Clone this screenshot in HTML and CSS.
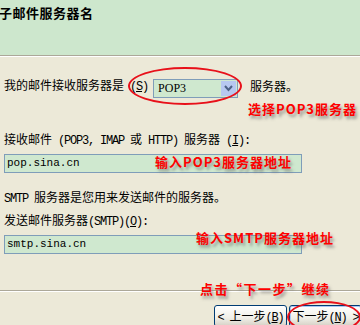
FILE: index.html
```html
<!DOCTYPE html>
<html>
<head>
<meta charset="utf-8">
<link rel="stylesheet" href="styles.css">
</head>
<body>
<div class="page">
  <div class="header">
    <div class="title">子邮件服务器名</div>
  </div>
  <div class="content">
    <div class="row1">
      <span class="label">我的邮件接收服务器是<span class="lat"> (<u>S</u>)</span></span>
      <div class="combo">
        <span class="combo-text">POP3</span>
        <span class="combo-btn">
          <svg width="9" height="9" viewBox="0 0 9 9"><path d="M1 2 L4.5 6 L8 2" fill="none" stroke="#4d6185" stroke-width="2"/></svg>
        </span>
      </div>
      <span class="label">服务器。</span>
    </div>
    <div class="label l2">接收邮件<span class="lat"> (POP3, IMAP </span>或<span class="lat"> HTTP) </span>服务器<span class="lat"> (<u>I</u>):</span></div>
    <div class="input">pop.sina.cn</div>
    <div class="label l3"><span class="lat">SMTP </span>服务器是您用来发送邮件的服务器。</div>
    <div class="label l4">发送邮件服务器<span class="lat">(SMTP)(<u>O</u>):</span></div>
    <div class="input">smtp.sina.cn</div>
  </div>
  <div class="footer">
    <div class="btn"><span class="lat">&lt; </span>上一步<span class="lat">(<u>B</u>)</span></div>
    <div class="btn next">下一步<span class="lat">(<u>N</u>) &gt;</span></div>
  </div>

  <div class="note n1">选择POP3服务器</div>
  <div class="note n2">输入POP3服务器地址</div>
  <div class="note n3">输入SMTP服务器地址</div>
  <div class="note n4">点击“下一步”继续</div>
  <div class="ring r1"></div>
  <div class="ring r2"></div>
</div>
</body>
</html>
```

FILE: styles.css
```css
html, body {
  margin: 0;
  padding: 0;
}
body {
  width: 360px;
  height: 325px;
  overflow: hidden;
  background: #ece9d8;
  font-family: "Noto Sans CJK SC", "DejaVu Sans", sans-serif;
  font-size: 12px;
  color: #000;
}
.page {
  position: relative;
  width: 360px;
  height: 325px;
  overflow: hidden;
}
.header {
  height: 55px;
  background: #cde7cd;
  border-bottom: 1px solid #aca899;
  box-shadow: 0 1px 0 #ffffff;
}
.title {
  font-size: 13px;
  font-weight: bold;
  line-height: 16px;
  padding-top: 5px;
  margin-left: -1px;
  letter-spacing: 0.5px;
}
.content {
  padding: 0 0 0 4px;
  display: flex;
  flex-direction: column;
}
.label {
  line-height: 14px;
  white-space: nowrap;
}
.lat {
  font-family: "Liberation Mono", monospace;
  letter-spacing: -1.2px;
}
u {
  text-underline-offset: 1px;
}
.row1 {
  display: flex;
  align-items: center;
  margin-top: 20px;
  height: 20px;
}
.combo {
  display: flex;
  width: 83px;
  height: 17px;
  border: 1px solid #7f9db9;
  background: #cfe8cf;
  margin-left: 5px;
  margin-right: 12px;
  margin-top: 5px;
}
.combo-text {
  flex: 1;
  padding-left: 4px;
  line-height: 17px;
  font-family: "Liberation Serif", serif;
  font-size: 12px;
}
.combo-btn {
  width: 15px;
  height: 15px;
  margin: 1px;
  background: #b7c8f0;
  display: flex;
  align-items: center;
  justify-content: center;
}
.l2 {
  margin-top: 36px;
}
.input {
  margin-top: 6px;
  width: 294px;
  height: 17px;
  border: 1px solid #7f9db9;
  background: #cfe8cf;
  font-family: "Liberation Mono", monospace;
  font-size: 11px;
  line-height: 17px;
  padding-left: 2px;
  box-sizing: content-box;
}
.l3 {
  margin-top: 17px;
}
.l4 {
  margin-top: 7px;
}
.footer {
  position: absolute;
  left: 0;
  top: 290px;
  width: 360px;
  height: 35px;
  border-top: 1px solid #aca899;
  box-shadow: inset 0 1px 0 #ffffff;
  display: flex;
  justify-content: flex-end;
  padding-top: 14px;
  box-sizing: border-box;
  gap: 2px;
}
.btn {
  width: 73px;
  height: 22px;
  box-sizing: border-box;
  border: 1px solid #003c74;
  border-radius: 3px;
  background: linear-gradient(#ffffff, #f0efe7 60%, #d6d0c5);
  line-height: 20px;
  text-align: center;
  font-size: 12px;
  white-space: nowrap;
}
.btn.next {
  margin-right: -2px;
  box-shadow: inset 0 0 0 1px #a9c8f5;
}
.note {
  position: absolute;
  color: #ff0000;
  font-weight: bold;
  font-size: 13px;
  line-height: 14px;
  white-space: nowrap;
  text-shadow: 2px 3px 3px rgba(90, 90, 90, 0.55);
  letter-spacing: 1px;
}
.n1 { left: 248px; top: 102px; }
.n2 { left: 155px; top: 155px; }
.n3 { left: 196px; top: 231px; }
.n4 { left: 200px; top: 282px; letter-spacing: 1.5px; }
.ring {
  position: absolute;
  border: 2px solid #e8101a;
  border-radius: 50%;
}
.r1 { left: 128px; top: 67px; width: 110px; height: 34px; }
.r2 { left: 287px; top: 301px; width: 70px; height: 28px; }
```
